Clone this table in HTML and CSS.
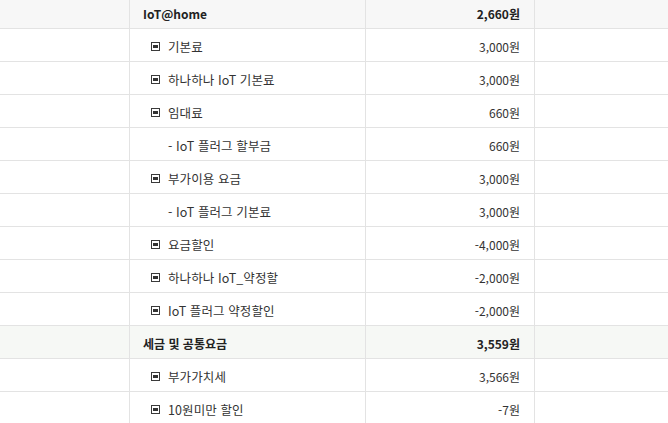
FILE: index.html
```html
<!DOCTYPE html>
<html lang="ko">
<head>
<meta charset="utf-8">
<link rel="stylesheet" href="styles.css">
</head>
<body>
<div class="table">
  <div class="row head"><div class="c1"></div><div class="c2 name">IoT@home</div><div class="c3 amt">2,660원</div><div class="c4"></div></div>
  <div class="row"><div class="c1"></div><div class="c2 item"><span class="ico"></span>기본료</div><div class="c3 amt">3,000원</div><div class="c4"></div></div>
  <div class="row"><div class="c1"></div><div class="c2 item"><span class="ico"></span>하나하나 IoT 기본료</div><div class="c3 amt">3,000원</div><div class="c4"></div></div>
  <div class="row"><div class="c1"></div><div class="c2 item"><span class="ico"></span>임대료</div><div class="c3 amt">660원</div><div class="c4"></div></div>
  <div class="row"><div class="c1"></div><div class="c2 sub">- IoT 플러그 할부금</div><div class="c3 amt">660원</div><div class="c4"></div></div>
  <div class="row"><div class="c1"></div><div class="c2 item"><span class="ico"></span>부가이용 요금</div><div class="c3 amt">3,000원</div><div class="c4"></div></div>
  <div class="row"><div class="c1"></div><div class="c2 sub">- IoT 플러그 기본료</div><div class="c3 amt">3,000원</div><div class="c4"></div></div>
  <div class="row"><div class="c1"></div><div class="c2 item"><span class="ico"></span>요금할인</div><div class="c3 amt">-4,000원</div><div class="c4"></div></div>
  <div class="row"><div class="c1"></div><div class="c2 item"><span class="ico"></span>하나하나 IoT_약정할</div><div class="c3 amt">-2,000원</div><div class="c4"></div></div>
  <div class="row"><div class="c1"></div><div class="c2 item"><span class="ico"></span>IoT 플러그 약정할인</div><div class="c3 amt">-2,000원</div><div class="c4"></div></div>
  <div class="row head tax"><div class="c1"></div><div class="c2 name">세금 및 공통요금</div><div class="c3 amt">3,559원</div><div class="c4"></div></div>
  <div class="row"><div class="c1"></div><div class="c2 item"><span class="ico"></span>부가가치세</div><div class="c3 amt">3,566원</div><div class="c4"></div></div>
  <div class="row"><div class="c1"></div><div class="c2 item"><span class="ico"></span>10원미만 할인</div><div class="c3 amt">-7원</div><div class="c4"></div></div>
</div>
</body>
</html>
```
FILE: styles.css
```css
html, body {
  margin: 0;
  padding: 0;
  background: #fff;
  overflow: hidden;
}
body {
  font-family: "Noto Sans CJK KR", "Noto Sans", sans-serif;
  font-size: 12px;
  color: #333;
}
.table {
  margin-top: -4px;
  width: 668px;
}
.row {
  display: flex;
  height: 33px;
  box-sizing: border-box;
  border-bottom: 1px solid #e3e3e3;
}
.row > div {
  box-sizing: border-box;
  display: flex;
  align-items: center;
  white-space: nowrap;
  padding-top: 2px;
}
.c1 { width: 130px; border-right: 1px solid #e3e3e3; }
.c2 { width: 236px; border-right: 1px solid #e3e3e3; }
.c3 { width: 169px; border-right: 1px solid #e3e3e3; }
.c4 { flex: 1; }
.head { background: #f7f7f7; }
.head.tax { background: #f6f8f5; }
.head > div { font-weight: bold; color: #222; }
.name { padding-left: 13px; }
.item, .sub { font-size: 12.5px; letter-spacing: 0.1px; }
.item { padding-left: 21px; }
.sub { padding-left: 38px; }
.amt { justify-content: flex-end; padding-right: 14px; }
.ico {
  width: 9px;
  height: 9px;
  box-sizing: border-box;
  border: 1px solid #3a3a3a;
  margin-right: 8px;
  position: relative;
  flex: none;
}
.ico::after {
  content: "";
  position: absolute;
  left: 1px;
  top: 2px;
  width: 5px;
  height: 3px;
  background: #333;
}
```
